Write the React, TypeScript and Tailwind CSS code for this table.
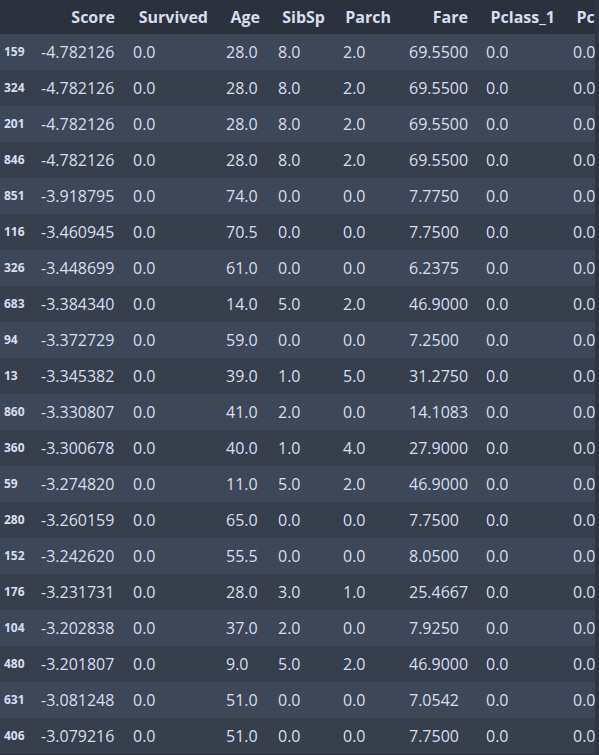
const columns = [
    { key: 'Score', width: 'w-[92px]' },
    { key: 'Survived', width: 'w-[93px]' },
    { key: 'Age', width: 'w-[52px]' },
    { key: 'SibSp', width: 'w-[65px]' },
    { key: 'Parch', width: 'w-[66px]' },
    { key: 'Fare', width: 'w-[77px]' },
    { key: 'Pclass_1', width: 'w-[87px]' },
    { key: 'Pclass_2', width: 'w-[86px]' },
];

const rows: [string, string, string, string, string, string, string][] = [
    ['159', '-4.782126', '28.0', '8.0', '2.0', '69.5500', '0.0'],
    ['324', '-4.782126', '28.0', '8.0', '2.0', '69.5500', '0.0'],
    ['201', '-4.782126', '28.0', '8.0', '2.0', '69.5500', '0.0'],
    ['846', '-4.782126', '28.0', '8.0', '2.0', '69.5500', '0.0'],
    ['851', '-3.918795', '74.0', '0.0', '0.0', '7.7750', '0.0'],
    ['116', '-3.460945', '70.5', '0.0', '0.0', '7.7500', '0.0'],
    ['326', '-3.448699', '61.0', '0.0', '0.0', '6.2375', '0.0'],
    ['683', '-3.384340', '14.0', '5.0', '2.0', '46.9000', '0.0'],
    ['94', '-3.372729', '59.0', '0.0', '0.0', '7.2500', '0.0'],
    ['13', '-3.345382', '39.0', '1.0', '5.0', '31.2750', '0.0'],
    ['860', '-3.330807', '41.0', '2.0', '0.0', '14.1083', '0.0'],
    ['360', '-3.300678', '40.0', '1.0', '4.0', '27.9000', '0.0'],
    ['59', '-3.274820', '11.0', '5.0', '2.0', '46.9000', '0.0'],
    ['280', '-3.260159', '65.0', '0.0', '0.0', '7.7500', '0.0'],
    ['152', '-3.242620', '55.5', '0.0', '0.0', '8.0500', '0.0'],
    ['176', '-3.231731', '28.0', '3.0', '1.0', '25.4667', '0.0'],
    ['104', '-3.202838', '37.0', '2.0', '0.0', '7.9250', '0.0'],
    ['480', '-3.201807', '9.0', '5.0', '2.0', '46.9000', '0.0'],
    ['631', '-3.081248', '51.0', '0.0', '0.0', '7.0542', '0.0'],
    ['406', '-3.079216', '51.0', '0.0', '0.0', '7.7500', '0.0'],
];

const cellClass = 'shrink-0 pl-[9px] pr-[9px] whitespace-nowrap';

export default function App() {
    return (
        <div className="flex h-[755px] w-[599px] overflow-hidden bg-[#2c323d] font-['Open_Sans',sans-serif] text-[#d7def0]">
            <div className="w-[595px] shrink-0 overflow-hidden">
                <div className="flex h-[34px] items-center bg-[#2c323d] text-[16px] font-bold">
                    <div className="w-[32px] shrink-0" />
                    {columns.map((c) => (
                        <div key={c.key} className={`${cellClass} ${c.width} text-right`}>
                            {c.key}
                        </div>
                    ))}
                </div>

                {rows.map((r, i) => {
                    const [idx, score, age, sib, parch, fare, p1] = r;
                    const values = [score, '0.0', age, sib, parch, fare, p1, '0.0'];
                    return (
                        <div
                            key={idx}
                            className={`flex h-[36px] items-center text-[16px] ${
                                i % 2 === 0 ? 'bg-[#3e4757]' : 'bg-[#383f4c]'
                            }`}
                        >
                            <div className="w-[32px] shrink-0 pl-[4px] text-[12px] font-bold">
                                {idx}
                            </div>
                            {values.map((v, j) => (
                                <div key={j} className={`${cellClass} ${columns[j].width}`}>
                                    {v}
                                </div>
                            ))}
                        </div>
                    );
                })}
            </div>
            <div className="w-[4px] shrink-0 bg-[#2f3541]" />
        </div>
    );
}
